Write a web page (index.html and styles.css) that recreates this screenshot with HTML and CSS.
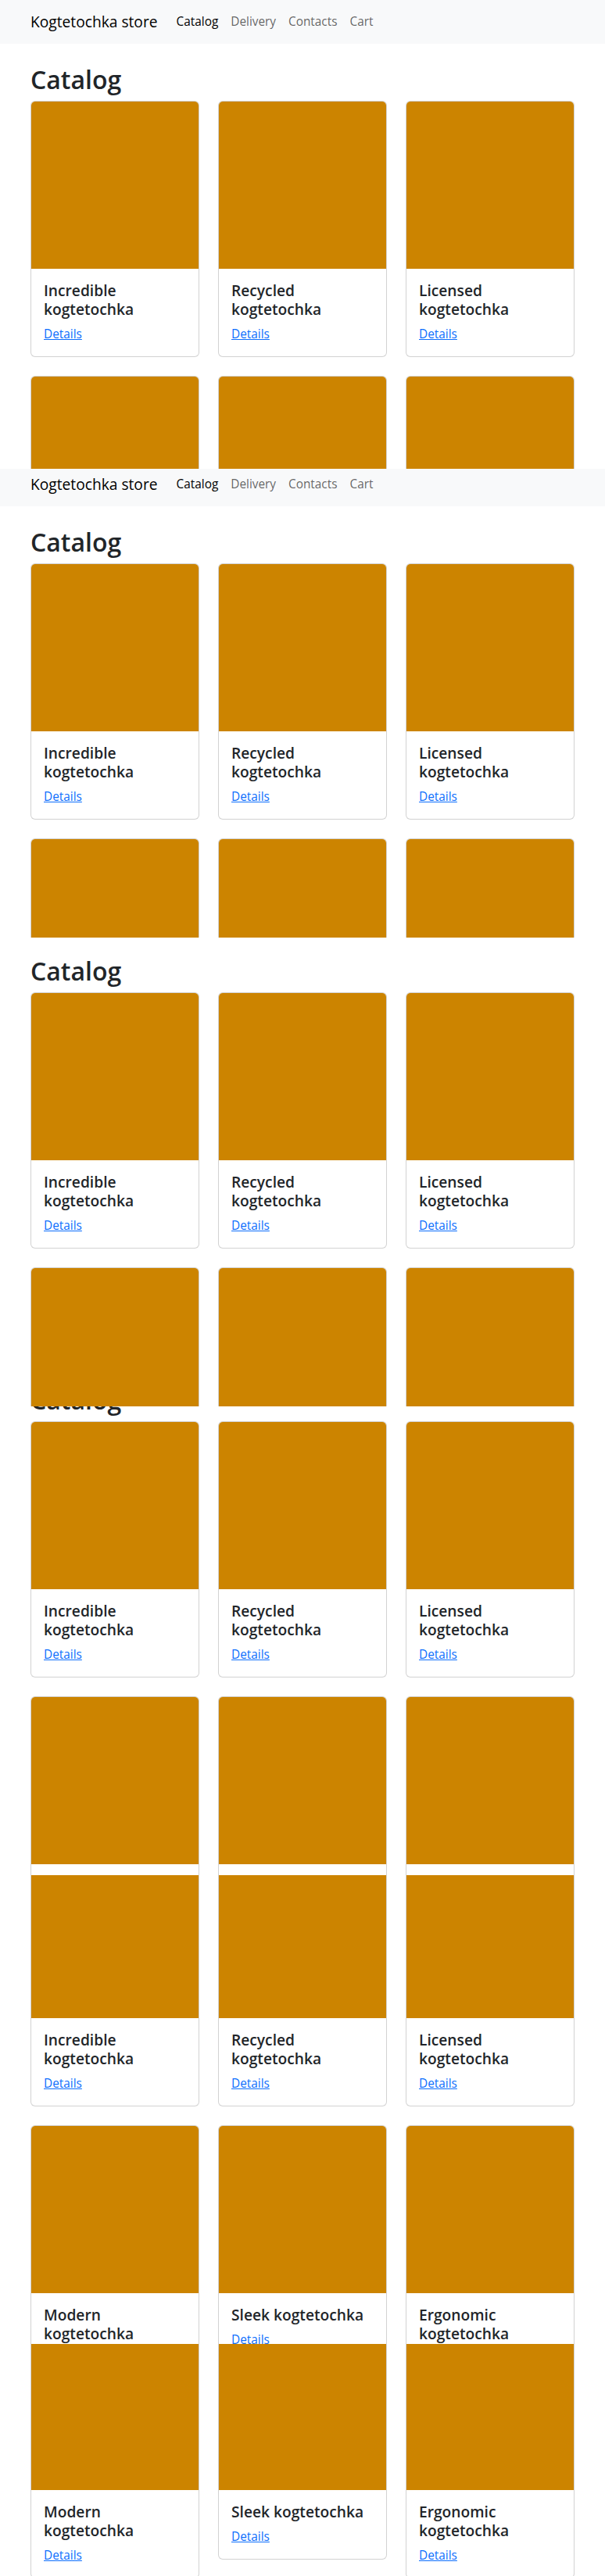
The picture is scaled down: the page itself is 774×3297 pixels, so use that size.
FILE: index.html
```html
<!DOCTYPE html>
<html lang="en">
<head>
<meta charset="utf-8">
<title>Kogtetochka store</title>
<link rel="stylesheet" href="styles.css">
</head>
<body>

<section class="shot shot-1">
<div class="page">
  <nav class="navbar"><div class="nav-inner"><a class="brand" href="#">Kogtetochka store</a><ul class="nav-links"><li><a class="nav-link active" href="#">Catalog</a></li><li><a class="nav-link" href="#">Delivery</a></li><li><a class="nav-link" href="#">Contacts</a></li><li><a class="nav-link" href="#">Cart</a></li></ul></div></nav>
  <main class="main">
    <h1 class="title">Catalog</h1>
    <div class="grid">
      <div class="card"><div class="card-img"></div><div class="card-body"><h5 class="card-title">Incredible kogtetochka</h5><div class="card-actions"><a class="card-link" href="#">Details</a></div></div></div>
      <div class="card"><div class="card-img"></div><div class="card-body"><h5 class="card-title">Recycled kogtetochka</h5><div class="card-actions"><a class="card-link" href="#">Details</a></div></div></div>
      <div class="card"><div class="card-img"></div><div class="card-body"><h5 class="card-title">Licensed kogtetochka</h5><div class="card-actions"><a class="card-link" href="#">Details</a></div></div></div>
      <div class="card"><div class="card-img"></div><div class="card-body"><h5 class="card-title">Modern kogtetochka</h5><div class="card-actions"><a class="card-link" href="#">Details</a></div></div></div>
      <div class="card"><div class="card-img"></div><div class="card-body"><h5 class="card-title">Sleek kogtetochka</h5><div class="card-actions"><a class="card-link" href="#">Details</a></div></div></div>
      <div class="card"><div class="card-img"></div><div class="card-body"><h5 class="card-title">Ergonomic kogtetochka</h5><div class="card-actions"><a class="card-link" href="#">Details</a></div></div></div>
    </div>
  </main>
</div>
</section>

<section class="shot shot-2">
<div class="page">
  <nav class="navbar"><div class="nav-inner"><a class="brand" href="#">Kogtetochka store</a><ul class="nav-links"><li><a class="nav-link active" href="#">Catalog</a></li><li><a class="nav-link" href="#">Delivery</a></li><li><a class="nav-link" href="#">Contacts</a></li><li><a class="nav-link" href="#">Cart</a></li></ul></div></nav>
  <main class="main">
    <h1 class="title">Catalog</h1>
    <div class="grid">
      <div class="card"><div class="card-img"></div><div class="card-body"><h5 class="card-title">Incredible kogtetochka</h5><div class="card-actions"><a class="card-link" href="#">Details</a></div></div></div>
      <div class="card"><div class="card-img"></div><div class="card-body"><h5 class="card-title">Recycled kogtetochka</h5><div class="card-actions"><a class="card-link" href="#">Details</a></div></div></div>
      <div class="card"><div class="card-img"></div><div class="card-body"><h5 class="card-title">Licensed kogtetochka</h5><div class="card-actions"><a class="card-link" href="#">Details</a></div></div></div>
      <div class="card"><div class="card-img"></div><div class="card-body"><h5 class="card-title">Modern kogtetochka</h5><div class="card-actions"><a class="card-link" href="#">Details</a></div></div></div>
      <div class="card"><div class="card-img"></div><div class="card-body"><h5 class="card-title">Sleek kogtetochka</h5><div class="card-actions"><a class="card-link" href="#">Details</a></div></div></div>
      <div class="card"><div class="card-img"></div><div class="card-body"><h5 class="card-title">Ergonomic kogtetochka</h5><div class="card-actions"><a class="card-link" href="#">Details</a></div></div></div>
    </div>
  </main>
</div>
</section>

<section class="shot shot-3">
<div class="page">
  <nav class="navbar"><div class="nav-inner"><a class="brand" href="#">Kogtetochka store</a><ul class="nav-links"><li><a class="nav-link active" href="#">Catalog</a></li><li><a class="nav-link" href="#">Delivery</a></li><li><a class="nav-link" href="#">Contacts</a></li><li><a class="nav-link" href="#">Cart</a></li></ul></div></nav>
  <main class="main">
    <h1 class="title">Catalog</h1>
    <div class="grid">
      <div class="card"><div class="card-img"></div><div class="card-body"><h5 class="card-title">Incredible kogtetochka</h5><div class="card-actions"><a class="card-link" href="#">Details</a></div></div></div>
      <div class="card"><div class="card-img"></div><div class="card-body"><h5 class="card-title">Recycled kogtetochka</h5><div class="card-actions"><a class="card-link" href="#">Details</a></div></div></div>
      <div class="card"><div class="card-img"></div><div class="card-body"><h5 class="card-title">Licensed kogtetochka</h5><div class="card-actions"><a class="card-link" href="#">Details</a></div></div></div>
      <div class="card"><div class="card-img"></div><div class="card-body"><h5 class="card-title">Modern kogtetochka</h5><div class="card-actions"><a class="card-link" href="#">Details</a></div></div></div>
      <div class="card"><div class="card-img"></div><div class="card-body"><h5 class="card-title">Sleek kogtetochka</h5><div class="card-actions"><a class="card-link" href="#">Details</a></div></div></div>
      <div class="card"><div class="card-img"></div><div class="card-body"><h5 class="card-title">Ergonomic kogtetochka</h5><div class="card-actions"><a class="card-link" href="#">Details</a></div></div></div>
    </div>
  </main>
</div>
</section>

<section class="shot shot-4">
<div class="page">
  <nav class="navbar"><div class="nav-inner"><a class="brand" href="#">Kogtetochka store</a><ul class="nav-links"><li><a class="nav-link active" href="#">Catalog</a></li><li><a class="nav-link" href="#">Delivery</a></li><li><a class="nav-link" href="#">Contacts</a></li><li><a class="nav-link" href="#">Cart</a></li></ul></div></nav>
  <main class="main">
    <h1 class="title">Catalog</h1>
    <div class="grid">
      <div class="card"><div class="card-img"></div><div class="card-body"><h5 class="card-title">Incredible kogtetochka</h5><div class="card-actions"><a class="card-link" href="#">Details</a></div></div></div>
      <div class="card"><div class="card-img"></div><div class="card-body"><h5 class="card-title">Recycled kogtetochka</h5><div class="card-actions"><a class="card-link" href="#">Details</a></div></div></div>
      <div class="card"><div class="card-img"></div><div class="card-body"><h5 class="card-title">Licensed kogtetochka</h5><div class="card-actions"><a class="card-link" href="#">Details</a></div></div></div>
      <div class="card"><div class="card-img"></div><div class="card-body"><h5 class="card-title">Modern kogtetochka</h5><div class="card-actions"><a class="card-link" href="#">Details</a></div></div></div>
      <div class="card"><div class="card-img"></div><div class="card-body"><h5 class="card-title">Sleek kogtetochka</h5><div class="card-actions"><a class="card-link" href="#">Details</a></div></div></div>
      <div class="card"><div class="card-img"></div><div class="card-body"><h5 class="card-title">Ergonomic kogtetochka</h5><div class="card-actions"><a class="card-link" href="#">Details</a></div></div></div>
    </div>
  </main>
</div>
</section>

<section class="shot shot-5">
<div class="page">
  <nav class="navbar"><div class="nav-inner"><a class="brand" href="#">Kogtetochka store</a><ul class="nav-links"><li><a class="nav-link active" href="#">Catalog</a></li><li><a class="nav-link" href="#">Delivery</a></li><li><a class="nav-link" href="#">Contacts</a></li><li><a class="nav-link" href="#">Cart</a></li></ul></div></nav>
  <main class="main">
    <h1 class="title">Catalog</h1>
    <div class="grid">
      <div class="card"><div class="card-img"></div><div class="card-body"><h5 class="card-title">Incredible kogtetochka</h5><div class="card-actions"><a class="card-link" href="#">Details</a></div></div></div>
      <div class="card"><div class="card-img"></div><div class="card-body"><h5 class="card-title">Recycled kogtetochka</h5><div class="card-actions"><a class="card-link" href="#">Details</a></div></div></div>
      <div class="card"><div class="card-img"></div><div class="card-body"><h5 class="card-title">Licensed kogtetochka</h5><div class="card-actions"><a class="card-link" href="#">Details</a></div></div></div>
      <div class="card"><div class="card-img"></div><div class="card-body"><h5 class="card-title">Modern kogtetochka</h5><div class="card-actions"><a class="card-link" href="#">Details</a></div></div></div>
      <div class="card"><div class="card-img"></div><div class="card-body"><h5 class="card-title">Sleek kogtetochka</h5><div class="card-actions"><a class="card-link" href="#">Details</a></div></div></div>
      <div class="card"><div class="card-img"></div><div class="card-body"><h5 class="card-title">Ergonomic kogtetochka</h5><div class="card-actions"><a class="card-link" href="#">Details</a></div></div></div>
    </div>
  </main>
</div>
</section>

<section class="shot shot-6">
<div class="page">
  <nav class="navbar"><div class="nav-inner"><a class="brand" href="#">Kogtetochka store</a><ul class="nav-links"><li><a class="nav-link active" href="#">Catalog</a></li><li><a class="nav-link" href="#">Delivery</a></li><li><a class="nav-link" href="#">Contacts</a></li><li><a class="nav-link" href="#">Cart</a></li></ul></div></nav>
  <main class="main">
    <h1 class="title">Catalog</h1>
    <div class="grid">
      <div class="card"><div class="card-img"></div><div class="card-body"><h5 class="card-title">Incredible kogtetochka</h5><div class="card-actions"><a class="card-link" href="#">Details</a></div></div></div>
      <div class="card"><div class="card-img"></div><div class="card-body"><h5 class="card-title">Recycled kogtetochka</h5><div class="card-actions"><a class="card-link" href="#">Details</a></div></div></div>
      <div class="card"><div class="card-img"></div><div class="card-body"><h5 class="card-title">Licensed kogtetochka</h5><div class="card-actions"><a class="card-link" href="#">Details</a></div></div></div>
      <div class="card"><div class="card-img"></div><div class="card-body"><h5 class="card-title">Modern kogtetochka</h5><div class="card-actions"><a class="card-link" href="#">Details</a></div></div></div>
      <div class="card"><div class="card-img"></div><div class="card-body"><h5 class="card-title">Sleek kogtetochka</h5><div class="card-actions"><a class="card-link" href="#">Details</a></div></div></div>
      <div class="card"><div class="card-img"></div><div class="card-body"><h5 class="card-title">Ergonomic kogtetochka</h5><div class="card-actions"><a class="card-link" href="#">Details</a></div></div></div>
    </div>
  </main>
</div>
</section>

</body>
</html>
```
FILE: styles.css
```css
* {
  box-sizing: border-box;
}

html,
body {
  margin: 0;
  padding: 0;
  background: #fff;
}

body {
  font-family: "Open Sans", "Noto Sans", sans-serif;
  color: #212529;
}

/* each slice of the stitched capture */
.shot {
  height: 600px;
  overflow: hidden;
}

.shot-6 {
  height: 297px;
}

.shot-2 .page { margin-top: -8px; }
.shot-3 .page { margin-top: -59px; }
.shot-4 .page { margin-top: -110px; }
.shot-5 .page { margin-top: -161px; }
.shot-6 .page { margin-top: -509px; }

.page {
  padding-bottom: 40px;
}

/* navbar */
.navbar {
  background: #f8f9fa;
  padding: 8px 0;
  height: 56px;
}

.nav-inner {
  width: 720px;
  margin: 0 auto;
  padding: 0 12px;
  height: 40px;
  display: flex;
  align-items: center;
}

.brand {
  display: block;
  font-size: 19.2px;
  line-height: 30px;
  padding: 5px 0;
  margin-right: 16px;
  color: #000;
  text-decoration: none;
  white-space: nowrap;
}

.nav-links {
  display: flex;
  list-style: none;
  margin: 0;
  padding: 0;
}

.nav-link {
  display: block;
  padding: 8px;
  font-size: 15.36px;
  line-height: 24px;
  color: rgba(0, 0, 0, 0.62);
  text-decoration: none;
}

.nav-link.active {
  color: #000;
}

/* main */
.main {
  width: 720px;
  margin: 0 auto;
  padding: 24px 12px 0;
}

.title {
  font-size: 32px;
  font-weight: 600;
  line-height: 41px;
  padding-top: 1px;
  height: 41px;
  margin: 0 0 8px;
  color: #212529;
}

.grid {
  display: grid;
  grid-template-columns: repeat(3, 216px);
  column-gap: 24px;
  row-gap: 24px;
  align-items: start;
}

.card {
  border: 1px solid rgba(0, 0, 0, 0.175);
  border-radius: 6px;
  overflow: hidden;
  background: #fff;
}

.card-img {
  height: 214px;
  background: #cc8400;
}

.card-body {
  padding: 16px;
}

.card-title {
  font-size: 19.2px;
  font-weight: 600;
  line-height: 24px;
  margin: 0 0 8px;
  color: #212529;
}

.card-actions {
  font-size: 15.36px;
  line-height: 24px;
}

.card-link {
  color: #0d6efd;
  text-decoration: underline;
}
```
